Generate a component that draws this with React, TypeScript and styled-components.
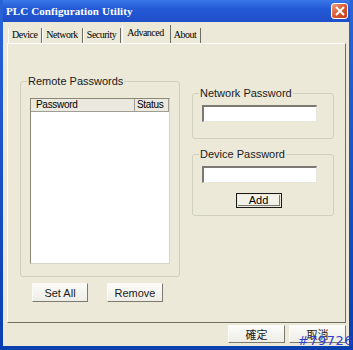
import React from 'react'
import styled, { createGlobalStyle } from 'styled-components'

const Global = createGlobalStyle`
  html, body { margin: 0; padding: 0; background: #0a3fb0; }
  * { box-sizing: border-box; }
`

const tabs = ['Device', 'Network', 'Security', 'Advanced', 'About']

export default function App() {
  return (
    <>
      <Global />
      <Window>
        <TitleBar>
          <Title>PLC Configuration Utility</Title>
          <CloseButton>
            <svg width="10" height="10" viewBox="0 0 10 10">
              <path d="M1 1L9 9M9 1L1 9" stroke="#fff" strokeWidth="2" />
            </svg>
          </CloseButton>
        </TitleBar>
        <Body>
          <TabStrip>
            {tabs.map((t) => (
              <Tab key={t} selected={t === 'Advanced'}>
                {t}
              </Tab>
            ))}
          </TabStrip>
          <Panel>
            <LeftColumn>
              <Group height={202} top={10}>
                <Legend>Remote Passwords</Legend>
                <ListView>
                  <ListHeader>
                    <HeaderCell>Password</HeaderCell>
                    <HeaderCell narrow>Status</HeaderCell>
                  </ListHeader>
                </ListView>
              </Group>
              <ButtonRow>
                <Button>Set All</Button>
                <Button>Remove</Button>
              </ButtonRow>
            </LeftColumn>
            <RightColumn>
              <Group height={52} top={0}>
                <Legend>Network Password</Legend>
                <Input />
              </Group>
              <Group height={68} top={0}>
                <Legend>Device Password</Legend>
                <Input />
                <DefaultButton>
                  <span>Add</span>
                </DefaultButton>
              </Group>
            </RightColumn>
          </Panel>
          <Footer>
            <FooterButton>確定</FooterButton>
            <FooterButton>取消</FooterButton>
          </Footer>
          <Watermark>#79726</Watermark>
        </Body>
      </Window>
    </>
  )
}

const Window = styled.div`
  width: 353px;
  height: 350px;
  display: flex;
  flex-direction: column;
  background: linear-gradient(#2a64d8, #0a3fb0);
  padding: 0 4px 4px 3px;
  font-family: 'Liberation Sans', Arial, sans-serif;
  font-size: 11px;
  color: #000;
`

const TitleBar = styled.div`
  height: 22px;
  display: flex;
  align-items: center;
  justify-content: space-between;
  padding: 0 0 0 3px;
  margin-right: -1px;
  background: linear-gradient(#3a78e8, #2459d6 40%, #1f4fc8);
`

const Title = styled.div`
  font-family: 'Liberation Serif', 'Times New Roman', serif;
  font-weight: bold;
  font-size: 11px;
  color: #fff;
  letter-spacing: 0.1px;
`

const CloseButton = styled.div`
  width: 17px;
  height: 16px;
  display: flex;
  align-items: center;
  justify-content: center;
  border: 1px solid #fff;
  border-radius: 3px;
  background: linear-gradient(135deg, #f0a080, #d8552c 55%, #c24020);
  margin-right: 2px;
`

const Body = styled.div`
  flex: 1;
  position: relative;
  display: flex;
  flex-direction: column;
  background: #ece9d8;
  padding: 4px 3px 0 4px;
`

const TabStrip = styled.div`
  display: flex;
  align-items: flex-end;
  height: 17px;
  padding-left: 1px;
`

const Tab = styled.div<{ selected?: boolean }>`
  font-family: 'Liberation Serif', 'Times New Roman', serif;
  font-size: 10px;
  letter-spacing: -0.5px;
  height: ${(p) => (p.selected ? 18 : 15)}px;
  line-height: ${(p) => (p.selected ? 15 : 14)}px;
  padding: 0 4px 0 3px;
  border-left: 1px solid #fff;
  border-right: 1px solid #6f6d62;
  ${(p) =>
    p.selected
      ? 'margin: 0 -1px 0 1px; padding: 0 6px 0 4px; position: relative; z-index: 1; background: #ece9d8;'
      : ''}
`

const Panel = styled.div`
  height: 280px;
  display: grid;
  grid-template-columns: 160px 142px;
  column-gap: 12px;
  padding: 31px 0 0 12px;
  border-top: 1px solid #fff;
  border-left: 1px solid #fff;
  border-right: 1px solid #6f6d62;
  border-bottom: 1px solid #6f6d62;
`

const LeftColumn = styled.div`
  display: flex;
  flex-direction: column;
  align-items: flex-start;
  gap: 6px;
`

const RightColumn = styled.div`
  display: flex;
  flex-direction: column;
  gap: 9px;
  padding-top: 12px;
`

const Group = styled.fieldset<{ height: number; top: number }>`
  margin: 0;
  width: 100%;
  height: ${(p) => p.height}px;
  border: 1px solid #d0d0bf;
  border-radius: 3px;
  padding: ${(p) => p.top}px 8px 0 9px;
`

const Legend = styled.legend`
  padding: 0 1px;
  margin-left: -3px;
  color: #1a1a1a;
  line-height: 13px;
`

const ListView = styled.div`
  width: 140px;
  height: 166px;
  background: #fff;
  border-top: 1px solid #8a8878;
  border-left: 1px solid #8a8878;
  border-right: 1px solid #d8d6c8;
  border-bottom: 1px solid #d8d6c8;
`

const ListHeader = styled.div`
  display: flex;
  height: 13px;
  background: #ebe9e0;
  border-bottom: 1px solid #a09e92;
`

const HeaderCell = styled.div<{ narrow?: boolean }>`
  ${(p) => (p.narrow ? 'width: 34px; padding-left: 2px;' : 'flex: 1; padding-left: 5px;')}
  font-size: 10px;
  letter-spacing: -0.3px;
  line-height: 12px;
  border-right: 1px solid #a09e92;
  overflow: hidden;
`

const ButtonRow = styled.div`
  display: flex;
  gap: 19px;
  padding-left: 12px;
`

const Button = styled.div`
  width: 56px;
  height: 19px;
  display: flex;
  align-items: center;
  justify-content: center;
  background: linear-gradient(#fbfbf9, #eeede6);
  border-top: 1px solid #fafaf7;
  border-left: 1px solid #fafaf7;
  border-right: 1px solid #7c7a70;
  border-bottom: 1px solid #7c7a70;
  color: #1a1a1a;
`

const Input = styled.div`
  width: 115px;
  height: 17px;
  margin-top: 5px;
  background: #fff;
  border-top: 2px solid #7a7870;
  border-left: 2px solid #7a7870;
  border-right: 1px solid #e8e6dc;
  border-bottom: 1px solid #e8e6dc;
`

const DefaultButton = styled.div`
  width: 46px;
  height: 15px;
  margin: 10px 0 0 34px;
  border: 1px solid #1a1a1a;
  padding: 1px;
  display: flex;

  span {
    flex: 1;
    display: flex;
    align-items: center;
    justify-content: center;
    background: #f2f1ea;
    border-right: 1px solid #7c7a70;
    border-bottom: 1px solid #7c7a70;
    line-height: 10px;
  }
`

const Footer = styled.div`
  display: flex;
  justify-content: flex-end;
  gap: 4px;
  padding-top: 2px;
`

const FooterButton = styled(Button)`
  width: 57px;
  height: 18px;
  font-family: 'Noto Sans CJK TC', 'Noto Sans CJK SC', sans-serif;
  font-size: 11px;
`

const Watermark = styled.div`
  position: absolute;
  right: -4px;
  bottom: -2px;
  font-family: 'DejaVu Sans', sans-serif;
  font-size: 13px;
  color: #2f3fd0;
  letter-spacing: 0.5px;
`
